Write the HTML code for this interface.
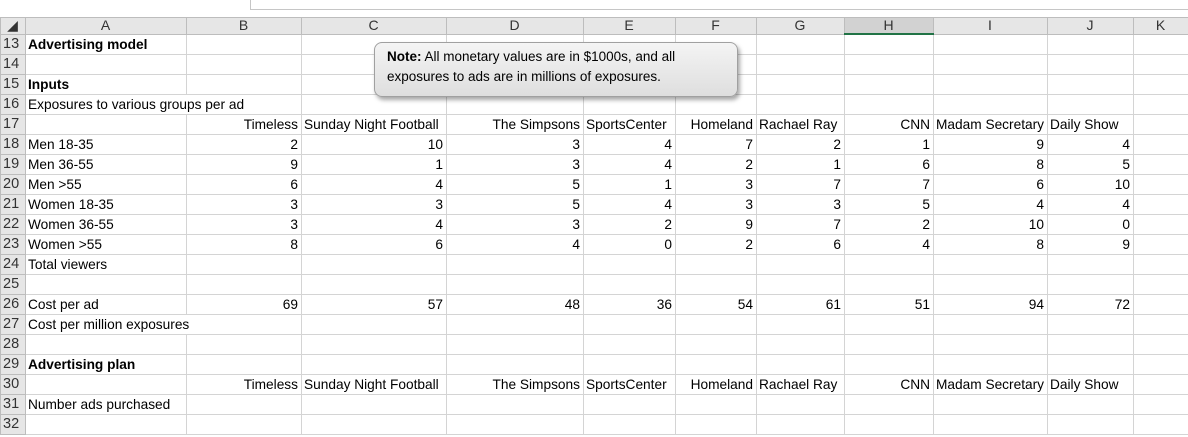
<!DOCTYPE html><html><head><style>
body{margin:0;width:1188px;height:437px;overflow:hidden;background:#fff;font-family:"Liberation Sans",Arial,sans-serif;font-size:13.7px;color:#000;position:relative}
.top{position:absolute;left:0;top:0;width:1188px;height:18px;background:#fff}
.fb{position:absolute;left:250px;top:-1px;width:940px;height:9px;border:1px solid #c6c6c6;background:#fff}
table{position:absolute;left:0;top:17px;border-collapse:collapse;table-layout:fixed;width:1188px}
td{border:1px solid #d4d4d4;height:19px;padding:0 3px 0 2px;white-space:nowrap;overflow:visible;line-height:19px}
tr.h td{background:#e6e6e6;height:15px;line-height:15px;text-align:center;color:#333;border-color:#bdbdbd;font-size:14px}
td.r{background:#e6e6e6;text-align:left;padding-left:2px;color:#333;border-color:#bdbdbd;font-size:14.5px}
.n{text-align:right}
b{font-weight:bold}
.note{position:absolute;left:374px;top:42px;width:350px;height:49px;border:1px solid #a0a0a0;border-radius:8px;background:linear-gradient(#f4f4f4,#dedede);box-shadow:2px 3px 4px rgba(0,0,0,.35);padding:4px 0 0 12px;font-size:13.5px;line-height:20px}
</style></head><body>
<div class="top"><div class="fb"></div></div>
<table>
<colgroup><col style="width:25px"><col style="width:161px"><col style="width:115px"><col style="width:145px"><col style="width:137px"><col style="width:92px"><col style="width:81px"><col style="width:88px"><col style="width:89px"><col style="width:114px"><col style="width:86px"><col style="width:55px"></colgroup>
<tr class="h"><td>◢</td><td>A</td><td>B</td><td>C</td><td>D</td><td>E</td><td>F</td><td>G</td><td style="background:#d2d2d2;border-bottom:2px solid #217346">H</td><td>I</td><td>J</td><td>K</td></tr>
<tr><td class="r">13</td><td><b>Advertising model</b></td><td></td><td></td><td></td><td></td><td></td><td></td><td></td><td></td><td></td><td></td></tr>
<tr><td class="r">14</td><td></td><td></td><td></td><td></td><td></td><td></td><td></td><td></td><td></td><td></td><td></td></tr>
<tr><td class="r">15</td><td><b>Inputs</b></td><td></td><td></td><td></td><td></td><td></td><td></td><td></td><td></td><td></td><td></td></tr>
<tr><td class="r">16</td><td style="border-right:none">Exposures to various groups per ad</td><td style="border-left:none"></td><td></td><td></td><td></td><td></td><td></td><td></td><td></td><td></td><td></td></tr>
<tr><td class="r">17</td><td></td><td class="n">Timeless</td><td>Sunday Night Football</td><td class="n">The Simpsons</td><td>SportsCenter</td><td class="n">Homeland</td><td>Rachael Ray</td><td class="n">CNN</td><td>Madam Secretary</td><td>Daily Show</td><td></td></tr>
<tr><td class="r">18</td><td>Men 18-35</td><td class="n">2</td><td class="n">10</td><td class="n">3</td><td class="n">4</td><td class="n">7</td><td class="n">2</td><td class="n">1</td><td class="n">9</td><td class="n">4</td><td></td></tr>
<tr><td class="r">19</td><td>Men 36-55</td><td class="n">9</td><td class="n">1</td><td class="n">3</td><td class="n">4</td><td class="n">2</td><td class="n">1</td><td class="n">6</td><td class="n">8</td><td class="n">5</td><td></td></tr>
<tr><td class="r">20</td><td>Men &gt;55</td><td class="n">6</td><td class="n">4</td><td class="n">5</td><td class="n">1</td><td class="n">3</td><td class="n">7</td><td class="n">7</td><td class="n">6</td><td class="n">10</td><td></td></tr>
<tr><td class="r">21</td><td>Women 18-35</td><td class="n">3</td><td class="n">3</td><td class="n">5</td><td class="n">4</td><td class="n">3</td><td class="n">3</td><td class="n">5</td><td class="n">4</td><td class="n">4</td><td></td></tr>
<tr><td class="r">22</td><td>Women 36-55</td><td class="n">3</td><td class="n">4</td><td class="n">3</td><td class="n">2</td><td class="n">9</td><td class="n">7</td><td class="n">2</td><td class="n">10</td><td class="n">0</td><td></td></tr>
<tr><td class="r">23</td><td>Women &gt;55</td><td class="n">8</td><td class="n">6</td><td class="n">4</td><td class="n">0</td><td class="n">2</td><td class="n">6</td><td class="n">4</td><td class="n">8</td><td class="n">9</td><td></td></tr>
<tr><td class="r">24</td><td>Total viewers</td><td></td><td></td><td></td><td></td><td></td><td></td><td></td><td></td><td></td><td></td></tr>
<tr><td class="r">25</td><td></td><td></td><td></td><td></td><td></td><td></td><td></td><td></td><td></td><td></td><td></td></tr>
<tr><td class="r">26</td><td>Cost per ad</td><td class="n">69</td><td class="n">57</td><td class="n">48</td><td class="n">36</td><td class="n">54</td><td class="n">61</td><td class="n">51</td><td class="n">94</td><td class="n">72</td><td></td></tr>
<tr><td class="r">27</td><td style="border-right:none">Cost per million exposures</td><td style="border-left:none"></td><td></td><td></td><td></td><td></td><td></td><td></td><td></td><td></td><td></td></tr>
<tr><td class="r">28</td><td></td><td></td><td></td><td></td><td></td><td></td><td></td><td></td><td></td><td></td><td></td></tr>
<tr><td class="r">29</td><td><b>Advertising plan</b></td><td></td><td></td><td></td><td></td><td></td><td></td><td></td><td></td><td></td><td></td></tr>
<tr><td class="r">30</td><td></td><td class="n">Timeless</td><td>Sunday Night Football</td><td class="n">The Simpsons</td><td>SportsCenter</td><td class="n">Homeland</td><td>Rachael Ray</td><td class="n">CNN</td><td>Madam Secretary</td><td>Daily Show</td><td></td></tr>
<tr><td class="r">31</td><td>Number ads purchased</td><td></td><td></td><td></td><td></td><td></td><td></td><td></td><td></td><td></td><td></td></tr>
<tr><td class="r">32</td><td></td><td></td><td></td><td></td><td></td><td></td><td></td><td></td><td></td><td></td><td></td></tr>
</table>
<div class="note"><b>Note:</b> All monetary values are in $1000s, and all<br>exposures to ads are in millions of exposures.</div>
</body></html>
